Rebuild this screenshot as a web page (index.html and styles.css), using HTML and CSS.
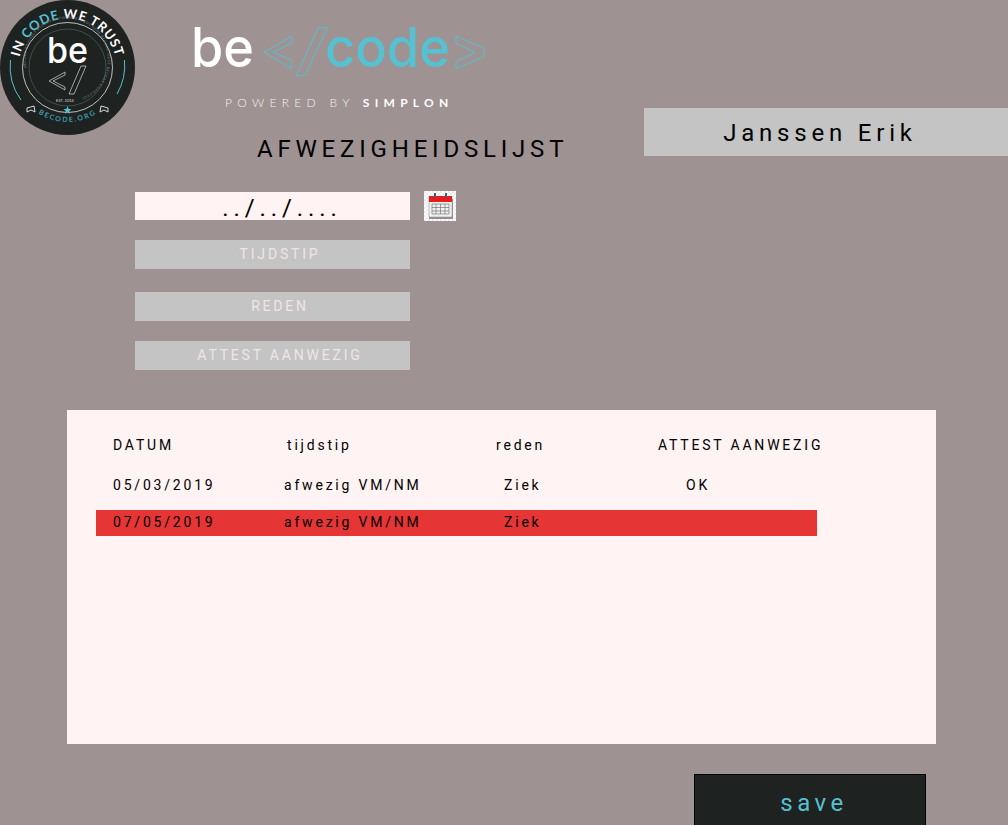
FILE: index.html
```html
<!DOCTYPE html>
<html>

<head>
    <title>Afwezigheidslijst</title>
    <link rel="stylesheet" href="styles.css">
</head>

<body>

    <div class="top">
        <svg class="badge" width="135" height="135" viewBox="0 0 135 135">
            <defs>
                <path id="arc-top" d="M 18.5 67.5 A 49 49 0 0 1 116.5 67.5"></path>
                <path id="arc-bottom" d="M 13 67.5 A 54.5 54.5 0 0 0 122 67.5"></path>
                <path id="arc-tiny" d="M 26.5 67.5 A 41 41 0 1 1 26.6 68"></path>
            </defs>
            <circle cx="67.5" cy="67.5" r="67.5" fill="#1e2221"></circle>
            <circle cx="67.5" cy="67.5" r="45" fill="none" stroke="#e8e8e8" stroke-width="0.8"></circle>
            <circle cx="67.5" cy="67.5" r="38.5" fill="none" stroke="#5b6a6c" stroke-width="0.6"></circle>
            <text class="badge-motto"><textPath href="#arc-top" startOffset="50%" text-anchor="middle"><tspan fill="#fff">IN </tspan><tspan fill="#56c1d0">CODE</tspan><tspan fill="#fff"> WE TRUST</tspan></textPath></text>
            <text class="badge-tiny"><textPath href="#arc-tiny">BECODE BRUSSELS BECODE ANTWERP BECODE GENK BECODE LIEGE BECODE CHARLEROI</textPath></text>
            <path d="M 10.5 60 A 57 57 0 0 0 21 100" fill="none" stroke="#56c1d0" stroke-width="1"></path>
            <path d="M 124.5 60 A 57 57 0 0 1 117 94" fill="none" stroke="#56c1d0" stroke-width="1"></path>
            <text class="badge-be" x="47" y="63" textLength="41" lengthAdjust="spacingAndGlyphs">be</text>
            <polygon points="65,72 65,75 53,81 65,87 65,90 49,81" fill="none" stroke="#ddd" stroke-width="0.7"></polygon>
            <polygon points="81,66 86,66 74,94 69,94" fill="none" stroke="#ddd" stroke-width="0.7"></polygon>
            <text class="badge-est" x="65" y="102" text-anchor="middle">EST. 2014</text>
            <polygon points="27,108 34,106 35,112 31,110 27,112" fill="none" stroke="#eee" stroke-width="0.9"></polygon>
            <polygon points="108,108 101,106 100,112 104,110 108,112" fill="none" stroke="#eee" stroke-width="0.9"></polygon>
            <polygon points="67.5,106 68.7,109 71.5,109 69.2,111 70,114 67.5,112 65,114 65.8,111 63.5,109 66.3,109" fill="#56c1d0"></polygon>
            <text class="badge-url"><textPath href="#arc-bottom" startOffset="50%" text-anchor="middle">BECODE.ORG</textPath></text>
        </svg>

        <div class="brand">
            <svg class="wordmark" width="300" height="75" viewBox="0 -15 300 75">
                <text class="wordmark-be" x="1" y="47" textLength="63" lengthAdjust="spacingAndGlyphs">be</text>
                <polygon class="wordmark-line" points="101.7,16 101.7,23.3 82.7,32.3 101.7,40 101.7,48.7 74,32.3"></polygon>
                <polygon class="wordmark-line" points="128.3,7.7 137.3,7.7 115,55.7 106.3,55.7"></polygon>
                <text class="wordmark-code" x="135" y="47" textLength="125" lengthAdjust="spacingAndGlyphs">code</text>
                <polygon class="wordmark-line" points="266,16 294,28.3 294,36.7 266,48.7 266,41.7 285,32.3 266,23.3"></polygon>
            </svg>
            <p class="powered">POWERED BY <b>SIMPLON</b></p>
            <h1 class="title">AFWEZIGHEIDSLIJST</h1>
        </div>

        <div class="user">Janssen Erik</div>
    </div>

    <form class="filters">
        <div class="date-row">
            <div class="field date-field">../../....</div>
            <svg class="calendar" width="32" height="30" viewBox="0 0 32 30">
                <defs>
                    <pattern id="check" width="4" height="4" patternUnits="userSpaceOnUse">
                        <rect width="4" height="4" fill="#fff"></rect>
                        <rect width="2" height="2" fill="#ececec"></rect>
                        <rect x="2" y="2" width="2" height="2" fill="#ececec"></rect>
                    </pattern>
                </defs>
                <rect width="32" height="30" fill="url(#check)"></rect>
                <rect x="5" y="8" width="24" height="20" fill="#8f8f8f"></rect>
                <rect x="5" y="6" width="23" height="20" fill="#f1f1f1" stroke="#9a9a9a" stroke-width="0.6"></rect>
                <rect x="5" y="5" width="23" height="6" fill="#e81c1c"></rect>
                <rect x="10" y="2" width="2" height="5" fill="#4a5f70"></rect>
                <rect x="21" y="2" width="2" height="5" fill="#4a5f70"></rect>
                <path d="M8 13H25M8 16.5H25M8 20H25M8 23H25M8 13V23M12 13V23M16.5 13V23M21 13V23M25 13V23" fill="none" stroke="#777" stroke-width="0.7"></path>
            </svg>
        </div>
        <button type="button" class="field select">TIJDSTIP</button>
        <button type="button" class="field select">REDEN</button>
        <button type="button" class="field select select-last">ATTEST AANWEZIG</button>
    </form>

    <div class="panel">
        <div class="row head">
            <span>DATUM</span>
            <span class="shift-time">tijdstip</span>
            <span>reden</span>
            <span>ATTEST AANWEZIG</span>
        </div>
        <div class="row">
            <span>05/03/2019</span>
            <span>afwezig VM/NM</span>
            <span class="shift-reason">Ziek</span>
            <span class="shift-ok">OK</span>
        </div>
        <div class="row missing">
            <span>07/05/2019</span>
            <span>afwezig VM/NM</span>
            <span class="shift-reason">Ziek</span>
            <span></span>
        </div>
    </div>

    <div class="actions">
        <button type="button" class="save">save</button>
    </div>

</body>

</html>
```

FILE: styles.css
```css
body {
    margin: 0;
    height: 825px;
    overflow: hidden;
    background-color: #9e9292;
    font-family: Roboto, "Liberation Sans", sans-serif;
}

.top {
    display: flex;
    height: 192px;
}

.badge {
    flex: none;
}

.badge-motto {
    font-family: Lato, sans-serif;
    font-size: 13px;
    font-weight: 700;
    letter-spacing: 0.7px;
}

.badge-tiny {
    font-family: Lato, sans-serif;
    font-size: 3.4px;
    letter-spacing: 0.55px;
    fill: #7c8a8c;
}

.badge-be {
    font-family: Inter, sans-serif;
    font-size: 36px;
    font-weight: 500;
    fill: #fff;
}

.badge-est {
    font-family: Lato, sans-serif;
    font-size: 4px;
    fill: #ddd;
}

.badge-url {
    font-family: Lato, sans-serif;
    font-size: 7px;
    font-weight: 700;
    letter-spacing: 1.7px;
    fill: #3f9cab;
}

.brand {
    width: 509px;
    flex: none;
}

.wordmark {
    display: block;
    margin: 5px 0 0 55px;
}

.wordmark-be,
.wordmark-code {
    font-family: Inter, sans-serif;
    font-size: 55px;
    font-weight: 500;
}

.wordmark-be {
    fill: #fff;
}

.wordmark-code {
    fill: #56c1d0;
}

.wordmark-line {
    fill: none;
    stroke: #56c1d0;
    stroke-width: 1;
}

.powered {
    margin: 15px 0 0 90px;
    font-family: Lato, sans-serif;
    font-size: 12px;
    font-weight: 300;
    line-height: 16px;
    letter-spacing: 5.3px;
    color: #f2f2f2;
    white-space: nowrap;
}

.powered b {
    font-weight: 700;
    color: #fff;
}

.title {
    margin: 24px 0 0 122px;
    font-size: 24px;
    font-weight: 400;
    line-height: 28px;
    letter-spacing: 4.8px;
    color: #000;
    white-space: nowrap;
}

.user {
    flex: none;
    width: 364px;
    height: 48px;
    margin-top: 108px;
    padding-right: 12px;
    box-sizing: border-box;
    background-color: #c4c4c4;
    font-size: 24px;
    line-height: 51px;
    letter-spacing: 4.8px;
    text-align: center;
    color: #000;
}

.filters {
    display: flex;
    flex-direction: column;
    align-items: flex-start;
    height: 218px;
    padding-left: 135px;
    box-sizing: border-box;
}

.date-row {
    display: flex;
    align-items: flex-start;
    gap: 14px;
    height: 48px;
}

.field {
    display: block;
    width: 275px;
    box-sizing: border-box;
    text-align: center;
}

.date-field {
    height: 28px;
    padding-left: 19px;
    background-color: #fff3f3;
    font-size: 24px;
    line-height: 32px;
    letter-spacing: 4.9px;
    color: #000;
}

.calendar {
    margin-top: -1px;
}

.select {
    height: 29px;
    margin: 0 0 23px;
    padding: 0 0 2px 15px;
    border: none;
    background-color: #c4c4c4;
    font-family: Roboto, sans-serif;
    font-size: 14px;
    letter-spacing: 2.8px;
    color: #f0e4e4;
}

.select:nth-of-type(2) {
    margin-bottom: 20px;
}

.panel {
    width: 869px;
    height: 334px;
    margin-left: 67px;
    padding: 22px 0 0 29px;
    box-sizing: border-box;
    background-color: #fff3f3;
}

.row {
    display: grid;
    grid-template-columns: 171px 212px 162px 159px;
    width: 721px;
    height: 26px;
    margin-bottom: 12px;
    padding-left: 17px;
    box-sizing: border-box;
    font-size: 14px;
    line-height: 26px;
    letter-spacing: 2.8px;
    color: #000;
    white-space: nowrap;
}

.head {
    margin-bottom: 14px;
}

.missing {
    line-height: 25px;
    background-color: #e53535;
}

.shift-time {
    padding-left: 3px;
}

.shift-reason {
    padding-left: 8px;
}

.shift-ok {
    padding-left: 28px;
}

.actions {
    display: flex;
    justify-content: flex-end;
    padding: 30px 82px 0 0;
}

.save {
    width: 232px;
    height: 60px;
    padding: 0 0 2px 8px;
    border: 1px solid #000;
    background-color: #1e2221;
    font-family: Roboto, sans-serif;
    font-size: 24px;
    letter-spacing: 4.5px;
    color: #56c1d0;
}
```
